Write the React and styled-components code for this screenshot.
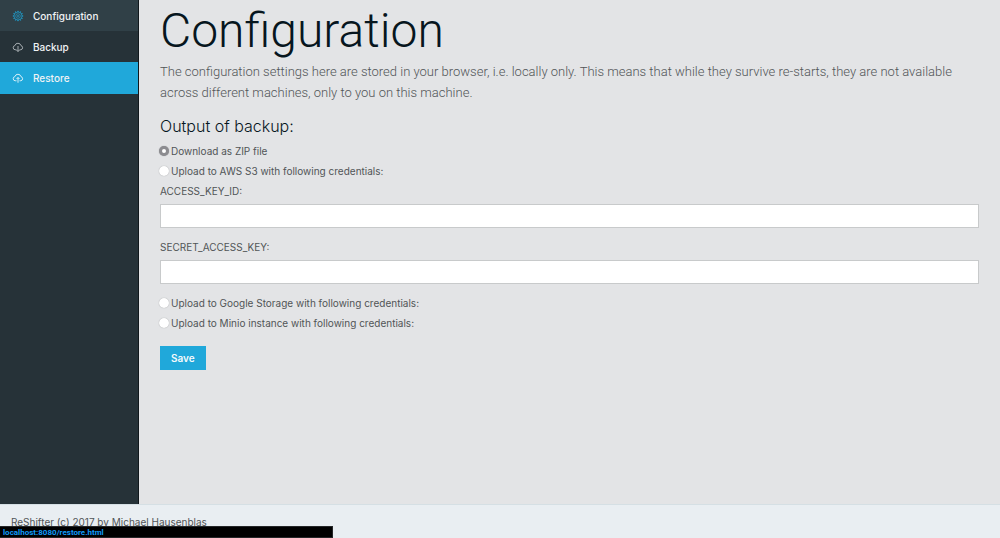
import React, { useState } from "react";
import styled, { createGlobalStyle } from "styled-components";

const GlobalStyle = createGlobalStyle`
  *, *::before, *::after { box-sizing: border-box; }
  body {
    margin: 0;
    background: #e3e4e6;
    color: #515557;
    font-family: Inter, "Liberation Sans", sans-serif;
    font-size: 10px;
    line-height: 20px;
  }
`;

const Page = styled.div`
  display: flex;
  flex-direction: column;
  min-height: 100vh;
`;

const Body = styled.div`
  display: flex;
  flex: 1;
`;

const Sidebar = styled.nav`
  flex: 0 0 139px;
  background: #263238;
  border-right: 1px solid #11181c;
`;

const NavLink = styled.a`
  display: flex;
  align-items: center;
  gap: 10px;
  height: 31px;
  padding-left: 13px;
  background: ${(p) => p.$background};
  color: #f0f3f5;
  font-weight: 500;
  text-decoration: none;

  &:last-child { height: 32px; }
  svg { color: ${(p) => p.$iconColor}; }
`;

const Icon = styled.svg`
  width: 10px;
  height: 10px;
  fill: none;
  stroke: currentColor;
  overflow: visible;
`;

const Main = styled.main`
  flex: 1;
  min-width: 0;
  padding: 0 21px;
`;

const Title = styled.h1`
  margin: 0;
  color: #07161e;
  font-family: Roboto, "Liberation Sans", sans-serif;
  font-size: 48px;
  line-height: 61px;
  font-weight: 300;
`;

const Lead = styled.p`
  margin: 0 0 13px;
  font-family: Roboto, "Liberation Sans", sans-serif;
  font-size: 13px;
  line-height: 21px;
  font-weight: 300;
`;

const Form = styled.form`
  display: flex;
  flex-direction: column;
  align-items: stretch;
`;

const Subtitle = styled.h2`
  margin: 0 0 5px;
  color: #07161e;
  font-size: 16px;
  line-height: 20px;
  font-weight: 300;
`;

const Option = styled.label`
  display: flex;
  align-items: center;
  align-self: flex-start;
  gap: 2px;
`;

const Radio = styled.input`
  appearance: none;
  width: 10px;
  height: 10px;
  margin: 0 0 0 -1px;
  border-radius: 50%;
  background: #fff;
  box-shadow: 0 0 1px #8e9193;

  &:checked {
    border: 3px solid #8c8c90;
  }
`;

const FieldLabel = styled.label`
  margin-bottom: 3px;
`;

const TextInput = styled.input`
  width: 100%;
  height: 24px;
  margin: 0 0 9px;
  padding: 0 8px;
  border: 1px solid #c8cacb;
  border-radius: 0;
  background: #fff;
  font: inherit;
`;

const SaveButton = styled.button`
  align-self: flex-start;
  height: 24px;
  margin: 13px 0 0;
  padding: 0 11px;
  border: 0;
  background: #20a8da;
  color: #f4fafc;
  font: inherit;
  font-weight: 600;
`;

const Footer = styled.footer`
  height: 34px;
  padding: 7px 11px 0;
  border-top: 1px solid #d5dfe4;
  background: #e9eef2;
`;

const LinkStatus = styled.div`
  position: fixed;
  left: 0;
  bottom: 0;
  width: 333px;
  height: 12px;
  padding-left: 3px;
  border: 1px solid #242628;
  border-left: 0;
  background: #000;
  color: #109bf8;
  font-family: Roboto, "Liberation Sans", sans-serif;
  font-size: 8px;
  line-height: 11px;
  font-weight: 700;
`;

const teeth = Array.from({ length: 12 }, (_, i) => i * 30);

function GearIcon() {
  return (
    <Icon viewBox="0 0 20 20" strokeWidth="1.5" aria-hidden="true">
      <circle cx="10" cy="10" r="8" />
      <circle cx="10" cy="10" r="4.6" />
      <circle cx="10" cy="10" r="1.5" />
      {teeth.map((angle) => (
        <path key={angle} d="M9 2 9.4 0h1.2L11 2" transform={`rotate(${angle} 10 10)`} />
      ))}
    </Icon>
  );
}

function CloudIcon({ up }) {
  return (
    <Icon viewBox="0 0 20 20" strokeWidth="1.7" aria-hidden="true">
      <path d="M7 15.5H4.2A4.2 4.2 0 0 1 3.8 7.2 6.3 6.3 0 0 1 16 7.3 4.2 4.2 0 0 1 15.8 15.5H13" />
      <path d={up ? "M10 19.5V9M7 12l3-3 3 3" : "M10 8v11M7 16l3 3 3-3"} />
    </Icon>
  );
}

const links = [
  { label: "Configuration", href: "#configuration", background: "#304047", iconColor: "#2093bd", icon: <GearIcon /> },
  { label: "Backup", href: "#backup", background: "#263238", iconColor: "#bcc2c5", icon: <CloudIcon /> },
  { label: "Restore", href: "#restore", background: "#20a8da", iconColor: "#f4fafc", icon: <CloudIcon up /> },
];

export default function App() {
  const [output, setOutput] = useState("zip");
  const option = (value, text) => (
    <Option>
      <Radio type="radio" name="output" value={value} checked={output === value} onChange={() => setOutput(value)} />
      {text}
    </Option>
  );

  return (
    <Page>
      <GlobalStyle />
      <Body>
        <Sidebar>
          {links.map(({ label, href, background, iconColor, icon }) => (
            <NavLink key={label} href={href} $background={background} $iconColor={iconColor}>
              {icon}
              {label}
            </NavLink>
          ))}
        </Sidebar>
        <Main>
          <Title>Configuration</Title>
          <Lead>
            The configuration settings here are stored in your browser, i.e. locally only. This means that while they
            survive re-starts, they are not available across different machines, only to you on this machine.
          </Lead>
          <Form onSubmit={(event) => event.preventDefault()}>
            <Subtitle>Output of backup:</Subtitle>
            {option("zip", "Download as ZIP file")}
            {option("s3", "Upload to AWS S3 with following credentials:")}
            <FieldLabel htmlFor="access-key">ACCESS_KEY_ID:</FieldLabel>
            <TextInput id="access-key" type="text" />
            <FieldLabel htmlFor="secret-key">SECRET_ACCESS_KEY:</FieldLabel>
            <TextInput id="secret-key" type="text" />
            {option("google", "Upload to Google Storage with following credentials:")}
            {option("minio", "Upload to Minio instance with following credentials:")}
            <SaveButton type="submit">Save</SaveButton>
          </Form>
        </Main>
      </Body>
      <Footer>ReShifter (c) 2017 by Michael Hausenblas</Footer>
      <LinkStatus>localhost:8080/restore.html</LinkStatus>
    </Page>
  );
}
